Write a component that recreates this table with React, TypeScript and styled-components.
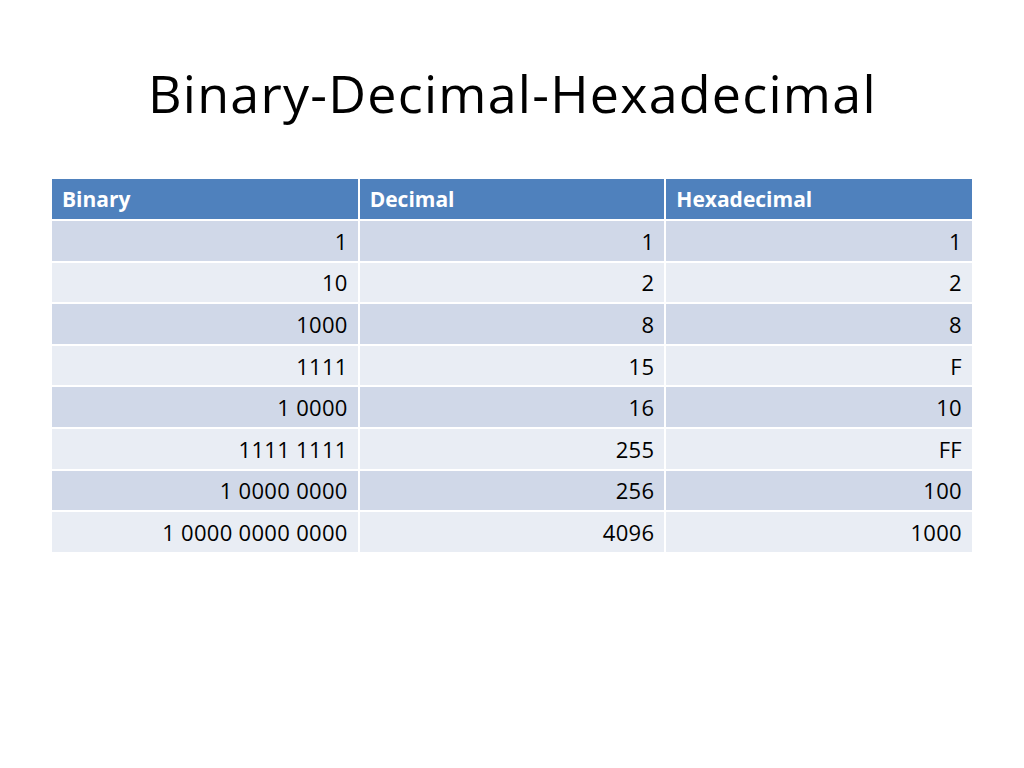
import React from 'react';
import styled, { createGlobalStyle } from 'styled-components';

const GlobalStyle = createGlobalStyle`
  html, body {
    margin: 0;
    padding: 0;
    background: #ffffff;
  }
  body {
    font-family: 'Open Sans', Lato, sans-serif;
  }
`;

const Slide = styled.div`
  width: 1024px;
  height: 768px;
  box-sizing: border-box;
  padding: 63px 52px 0 52px;
  background: #ffffff;
`;

const Title = styled.h1`
  margin: 0 0 0 96px;
  font-family: 'Open Sans', Lato, sans-serif;
  font-weight: 400;
  font-size: 52px;
  letter-spacing: 1.25px;
  line-height: 60px;
  color: #000000;
  white-space: nowrap;
`;

const Table = styled.table`
  margin-top: 56px;
  width: 920px;
  border-collapse: collapse;
  table-layout: fixed;
  font-family: 'Open Sans', Lato, sans-serif;
  font-size: 22px;
  letter-spacing: 0.3px;
`;

const HeadCell = styled.th`
  height: 40px;
  padding: 0 10px;
  background: #4f81bd;
  color: #ffffff;
  font-size: 21px;
  font-weight: 700;
  letter-spacing: 0;
  text-align: left;
  border-left: 2px solid #ffffff;
  border-bottom: 2px solid #ffffff;
  &:first-child {
    border-left: none;
  }
`;

const Row = styled.tr<{ $odd: boolean }>`
  background: ${p => (p.$odd ? '#d0d8e8' : '#e9edf4')};
`;

const Cell = styled.td`
  height: 39.6px;
  padding: 0 10px;
  text-align: right;
  color: #000000;
  border-left: 2px solid #ffffff;
  border-top: 2px solid #ffffff;
  &:first-child {
    border-left: none;
  }
`;

const rows: [string, string, string][] = [
  ['1', '1', '1'],
  ['10', '2', '2'],
  ['1000', '8', '8'],
  ['1111', '15', 'F'],
  ['1 0000', '16', '10'],
  ['1111 1111', '255', 'FF'],
  ['1 0000 0000', '256', '100'],
  ['1 0000 0000 0000', '4096', '1000'],
];

const App: React.FC = () => (
  <>
    <GlobalStyle />
    <Slide>
      <Title>Binary-Decimal-Hexadecimal</Title>
      <Table>
        <thead>
          <tr>
            <HeadCell>Binary</HeadCell>
            <HeadCell>Decimal</HeadCell>
            <HeadCell>Hexadecimal</HeadCell>
          </tr>
        </thead>
        <tbody>
          {rows.map((r, i) => (
            <Row key={i} $odd={i % 2 === 0}>
              <Cell>{r[0]}</Cell>
              <Cell>{r[1]}</Cell>
              <Cell>{r[2]}</Cell>
            </Row>
          ))}
        </tbody>
      </Table>
    </Slide>
  </>
);

export default App;
